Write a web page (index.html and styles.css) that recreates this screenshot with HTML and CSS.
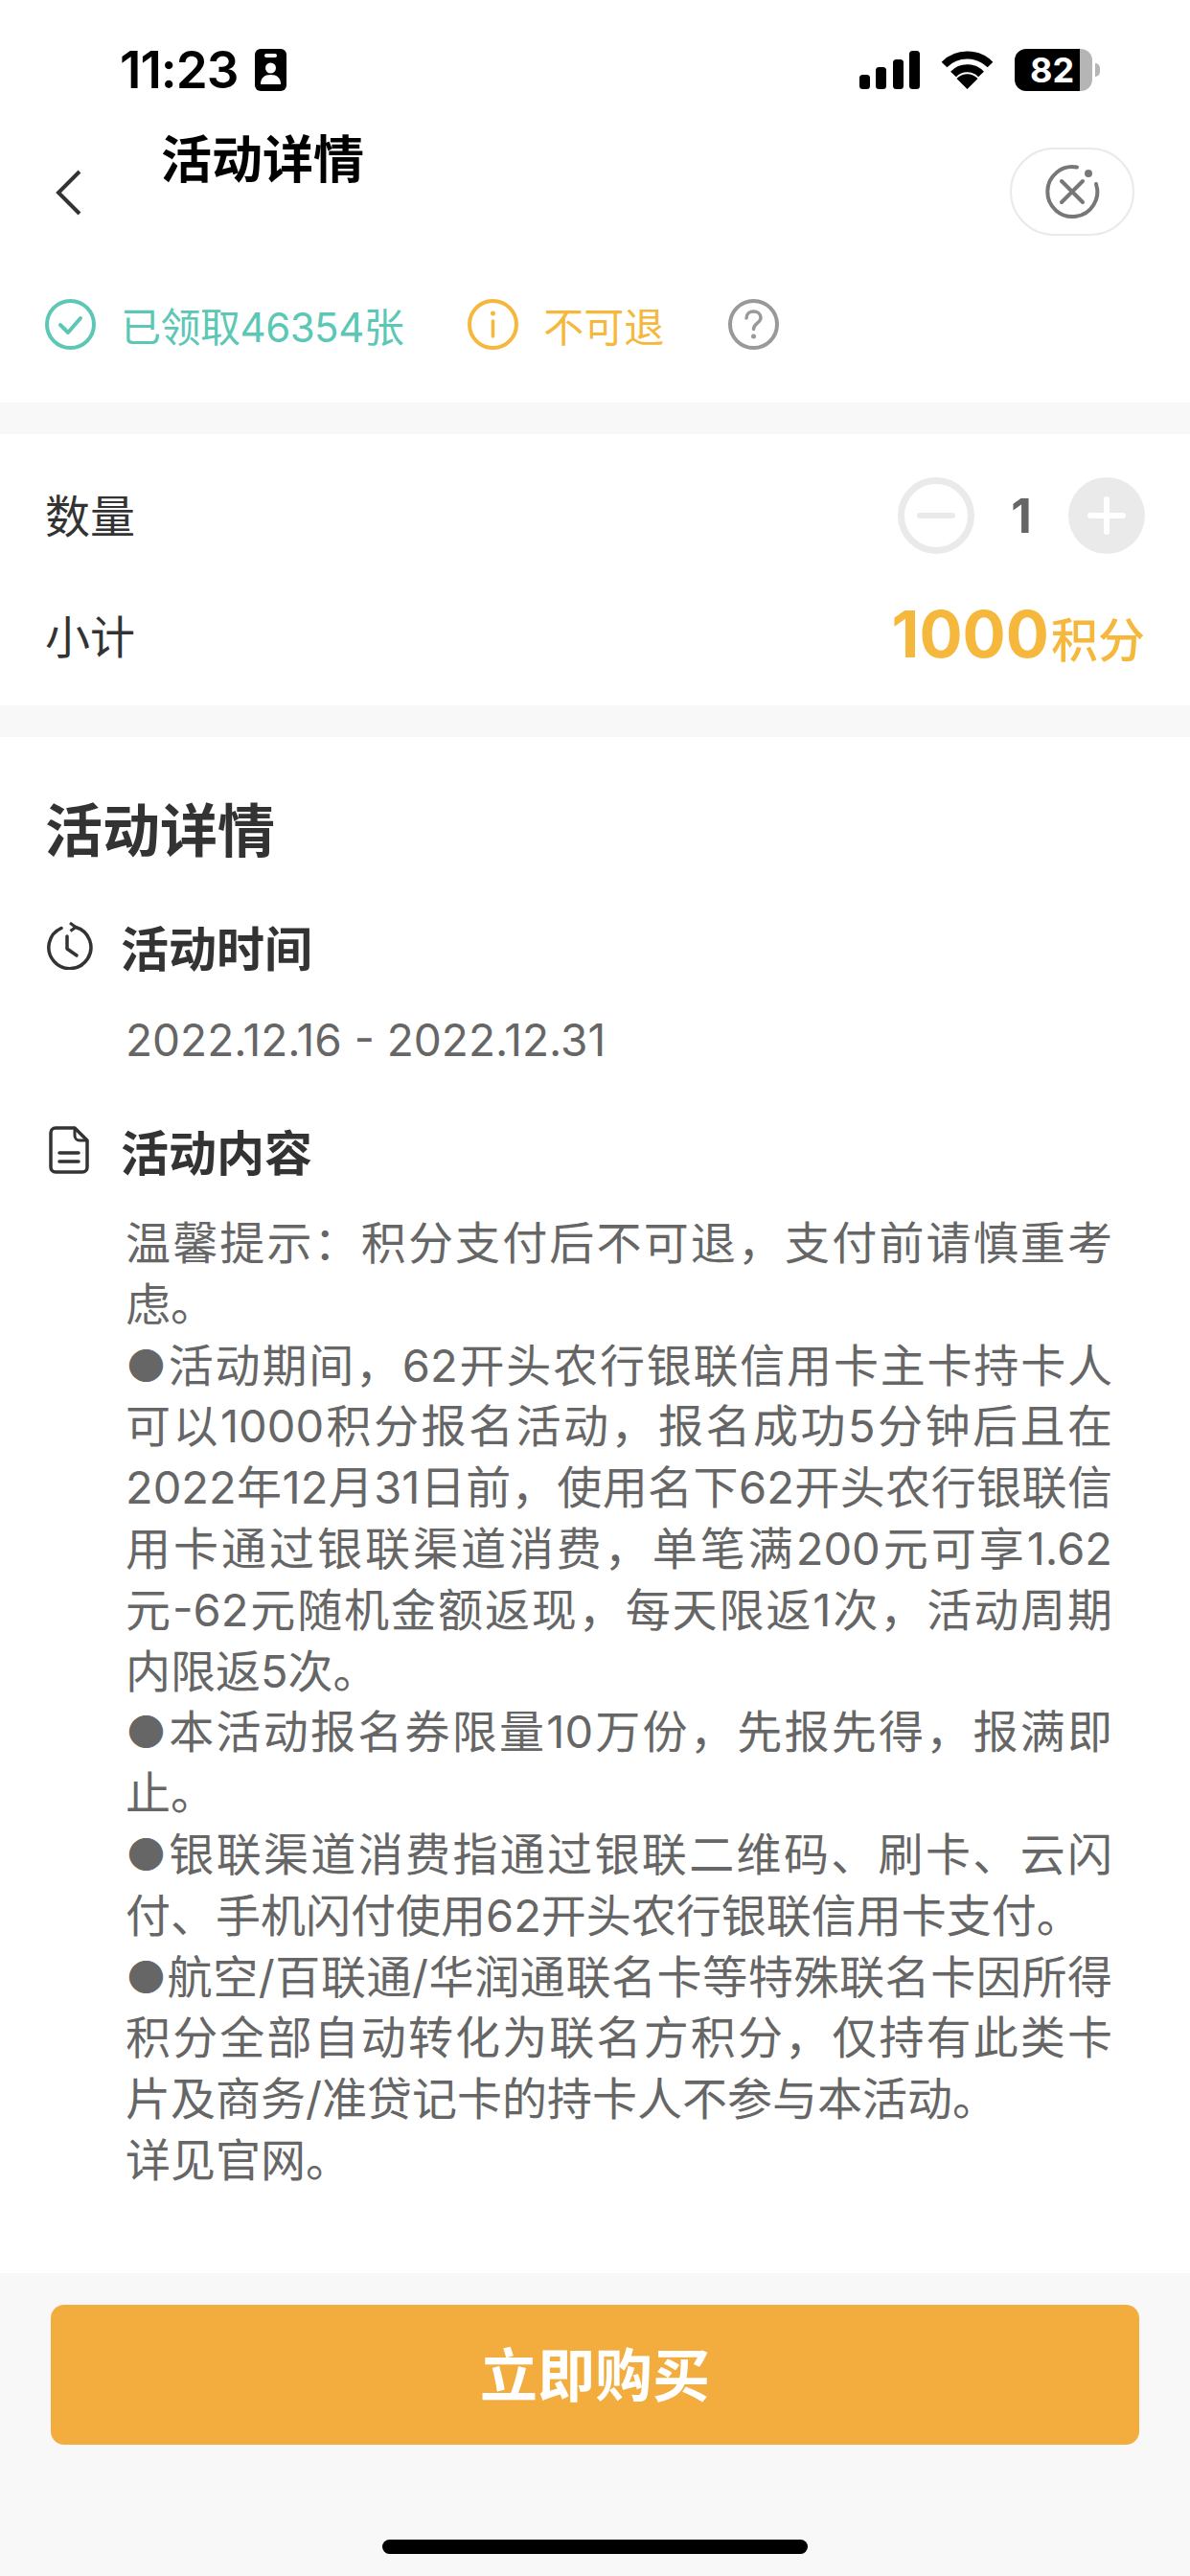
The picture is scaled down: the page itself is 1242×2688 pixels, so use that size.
FILE: index.html
```html
<!DOCTYPE html>
<html lang="zh-CN">
<head>
    <meta charset="UTF-8">
    <meta name="viewport" content="width=device-width, initial-scale=1.0">
    <title>活动详情</title>
    <link rel="stylesheet" href="styles.css">
</head>
<body>
    <div class="page">
        <div class="status-bar">
            <span class="time">11:23</span>
            <svg class="person-icon" width="33" height="44" viewBox="0 0 33 44">
                <rect width="33" height="44" rx="6" fill="#000"/>
                <rect x="10" y="5" width="13" height="4" rx="2" fill="#fff"/>
                <circle cx="16.500" cy="20" r="5.500" fill="#fff"/>
                <path d="M6 37c0-7 4-10 10.500-10S27 30 27 37z" fill="#fff"/>
            </svg>
            <div class="status-right">
                <svg width="63" height="40" viewBox="0 0 63 40">
                    <rect x="0" y="25" width="11" height="15" rx="3.500"/>
                    <rect x="17" y="17" width="11" height="23" rx="3.500"/>
                    <rect x="35" y="9" width="11" height="31" rx="3.500"/>
                    <rect x="52" y="0" width="11" height="40" rx="3.500"/>
                </svg>
                <svg class="wifi-icon" width="55" height="40" viewBox="0 0 55 40">
                    <path d="M3.500 14.500a34 34 0 0 1 48 0" fill="none" stroke="#000" stroke-width="8"/>
                    <path d="M13 24.500a20 20 0 0 1 29 0" fill="none" stroke="#000" stroke-width="8"/>
                    <path d="M27.500 40l-11-11a15 15 0 0 1 22 0z"/>
                </svg>
                <div class="battery">
                    <div class="battery-body"><span>82</span></div>
                    <div class="battery-nub"></div>
                </div>
            </div>
        </div>

        <div class="nav">
            <svg class="back-icon" width="28" height="48" viewBox="0 0 28 48">
                <path d="M25 2L3 24l22 22" fill="none" stroke="#333" stroke-width="4"/>
            </svg>
            <h1 class="nav-title">活动详情</h1>
            <div class="close-btn">
                <svg width="64" height="64" viewBox="0 0 64 64">
                    <path d="M37 6.500A26 26 0 1 0 57 24" fill="none" stroke="#777" stroke-width="4" stroke-linecap="round"/>
                    <circle cx="49" cy="13" r="4" fill="#777"/>
                    <path d="M21 21l22 22M43 21L21 43" stroke="#777" stroke-width="4" stroke-linecap="round"/>
                </svg>
            </div>
        </div>

        <div class="tags">
            <svg width="53" height="53" viewBox="0 0 53 53">
                <circle cx="26.500" cy="26.500" r="24.500" fill="none" stroke="#5cc7b5" stroke-width="4"/>
                <path d="M16 27l8 8 13-15" fill="none" stroke="#5cc7b5" stroke-width="4" stroke-linecap="round" stroke-linejoin="round"/>
            </svg>
            <span class="tag-text tag-green">已领取46354张</span>
            <svg class="tag-gap" width="53" height="53" viewBox="0 0 53 53">
                <circle cx="26.500" cy="26.500" r="24.500" fill="none" stroke="#f5b83d" stroke-width="4"/>
                <circle cx="26.500" cy="15" r="2.500" fill="#f5b83d"/>
                <path d="M26.500 23v16" stroke="#f5b83d" stroke-width="3.500" stroke-linecap="round"/>
            </svg>
            <span class="tag-text tag-yellow">不可退</span>
            <svg class="tag-gap" width="53" height="53" viewBox="0 0 53 53">
                <circle cx="26.500" cy="26.500" r="24.500" fill="none" stroke="#999" stroke-width="4"/>
                <path d="M19 20c0-4.500 3.500-7 7.500-7s7.500 2.500 7.500 6.500c0 5.500-7.500 6-7.500 12" fill="none" stroke="#999" stroke-width="3.500" stroke-linecap="round"/>
                <circle cx="26.500" cy="39" r="2.500" fill="#999"/>
            </svg>
        </div>

        <div class="band"></div>

        <div class="order">
            <div class="order-row">
                <span class="order-label">数量</span>
                <div class="stepper">
                    <div class="step-btn step-minus"><i class="bar-h"></i></div>
                    <span class="count">1</span>
                    <div class="step-btn step-plus"><i class="bar-h"></i><i class="bar-v"></i></div>
                </div>
            </div>
            <div class="order-row">
                <span class="order-label">小计</span>
                <div class="price"><b>1000</b><span>积分</span></div>
            </div>
        </div>

        <div class="band"></div>

        <div class="detail">
            <h2 class="detail-title">活动详情</h2>

            <div class="section-head section-time">
                <svg width="50" height="50" viewBox="0 0 50 50">
                    <path d="M31 5.500A22 22 0 1 1 16 6.500" fill="none" stroke="#333" stroke-width="3.500" stroke-linecap="round"/>
                    <path d="M25 1l6 4.500-5.500 4" fill="none" stroke="#333" stroke-width="3" stroke-linejoin="round"/>
                    <path d="M22 15v13l10 7" fill="none" stroke="#333" stroke-width="3.500" stroke-linecap="round" stroke-linejoin="round"/>
                </svg>
                <h3>活动时间</h3>
            </div>
            <p class="date">2022.12.16 - 2022.12.31</p>

            <div class="section-head section-content">
                <svg width="50" height="50" viewBox="0 0 50 50">
                    <path d="M10 2h20l13 13v28a5 5 0 0 1-5 5H10a5 5 0 0 1-5-5V7a5 5 0 0 1 5-5z" fill="none" stroke="#333" stroke-width="3.500" stroke-linejoin="round"/>
                    <path d="M30 2v8a5 5 0 0 0 5 5h8" fill="none" stroke="#333" stroke-width="3"/>
                    <path d="M14 28h20M14 37h20" stroke="#333" stroke-width="3.500" stroke-linecap="round"/>
                </svg>
                <h3>活动内容</h3>
            </div>
            <div class="content">
                <p>温馨提示：积分支付后不可退，支付前请慎重考虑。</p>
                <p>●活动期间，62开头农行银联信用卡主卡持卡人可以1000积分报名活动，报名成功5分钟后且在2022年12月31日前，使用名下62开头农行银联信用卡通过银联渠道消费，单笔满200元可享1.62元-62元随机金额返现，每天限返1次，活动周期内限返5次。</p>
                <p>●本活动报名券限量10万份，先报先得，报满即止。</p>
                <p>●银联渠道消费指通过银联二维码、刷卡、云闪付、手机闪付使用62开头农行银联信用卡支付。</p>
                <p>●航空/百联通/华润通联名卡等特殊联名卡因所得积分全部自动转化为联名方积分，仅持有此类卡片及商务/准贷记卡的持卡人不参与本活动。</p>
                <p>详见官网。</p>
            </div>
        </div>

        <div class="footer">
            <div class="buy-btn">立即购买</div>
            <div class="home-bar"></div>
        </div>
    </div>
</body>
</html>
```

FILE: styles.css
```css
* {
    box-sizing: border-box;
}

body {
    margin: 0;
    background: #fff;
    font-family: Inter, "Noto Sans CJK SC", sans-serif;
    color: #333;
}

.page {
    width: 1242px;
    height: 2688px;
    display: flex;
    flex-direction: column;
    overflow: hidden;
}

/* status bar */
.status-bar {
    height: 130px;
    padding: 48px 94px 0 125px;
    display: flex;
    align-items: flex-start;
}

.time {
    font-size: 53px;
    font-weight: 600;
    line-height: 50px;
    color: #000;
    letter-spacing: -1px;
}

.person-icon {
    margin: 3px 0 0 18px;
}

.status-right {
    margin-left: auto;
    display: flex;
    align-items: center;
    gap: 22px;
    height: 50px;
}

.battery {
    display: flex;
    align-items: center;
}

.battery-body {
    width: 81px;
    height: 44px;
    border-radius: 12px;
    background: linear-gradient(90deg, #000 68px, #b5b5b5 68px);
    display: flex;
    align-items: center;
    padding-left: 16px;
}

.battery-body span {
    color: #fff;
    font-size: 36px;
    font-weight: 700;
}

.battery-nub {
    width: 5px;
    height: 14px;
    margin-left: 3px;
    background: #b5b5b5;
    border-radius: 0 7px 7px 0;
}

/* nav */
.nav {
    height: 120px;
    padding: 0 58px 0 58px;
    display: flex;
    align-items: flex-start;
}

.back-icon {
    margin-top: 47px;
}

.nav-title {
    margin: 0 0 0 82px;
    font-size: 53px;
    font-weight: 700;
    line-height: 74px;
    color: #000;
}

.close-btn {
    width: 130px;
    height: 92px;
    margin: 24px 0 0 auto;
    border: 2px solid #eaeaea;
    border-radius: 46px;
    display: flex;
    align-items: center;
    justify-content: center;
}

/* tags */
.tags {
    height: 170px;
    padding: 6px 0 0 47px;
    display: flex;
    align-items: center;
}

.tag-text {
    margin-left: 26px;
    font-size: 42px;
}

.tag-green {
    color: #5cc7b5;
    letter-spacing: -0.5px;
}

.tag-yellow {
    color: #f5b83d;
}

.tag-gap {
    margin-left: 67px;
}

.band {
    height: 33px;
    flex: none;
    background: #f8f8f8;
}

/* quantity and subtotal */
.order {
    padding: 20px 47px 13px;
}

.order-row {
    height: 125px;
    display: flex;
    align-items: center;
    justify-content: space-between;
}

.order-row + .order-row {
    padding-top: 2px;
}

.order-label {
    font-size: 47px;
}

.stepper {
    display: flex;
    align-items: center;
    padding-top: 4px;
}

.step-btn {
    width: 80px;
    height: 80px;
    border-radius: 50%;
    position: relative;
}

.step-minus {
    border: 7px solid #eaeaea;
}

.step-plus {
    background: #eaeaea;
}

.step-btn i {
    position: absolute;
    border-radius: 3px;
}

.bar-h {
    left: 20px;
    right: 20px;
    top: 37px;
    height: 6px;
    background: #fff;
}

.step-minus .bar-h {
    left: 13px;
    right: 13px;
    top: 30px;
    background: #eaeaea;
}

.bar-v {
    top: 20px;
    bottom: 20px;
    left: 37px;
    width: 6px;
    background: #fff;
}

.count {
    width: 98px;
    text-align: center;
    font-size: 50px;
    font-weight: 700;
    color: #666;
}

.price {
    color: #f5b83d;
    display: flex;
    align-items: baseline;
}

.price b {
    font-size: 67px;
    font-weight: 700;
}

.price span {
    margin-left: 2px;
    font-size: 49px;
    font-weight: 500;
}

/* details */
.detail {
    flex: 1;
    padding: 58px 47px 0;
}

.detail-title {
    margin: 0;
    font-size: 60px;
    font-weight: 700;
    line-height: 80px;
}

.section-head {
    height: 60px;
    display: flex;
    align-items: center;
    gap: 28px;
}

.section-head svg {
    margin-left: 1px;
}

.section-head h3 {
    margin: 0;
    font-size: 50px;
    font-weight: 700;
}

.section-time {
    margin-top: 50px;
}

.section-content {
    margin-top: 55px;
}

.date {
    margin: 38px 0 0 84px;
    font-size: 46px;
    line-height: 60px;
    color: #666;
}

.content {
    margin: 35px 0 0 84px;
    width: 1030px;
    font-size: 47px;
    line-height: 63.8px;
    text-align: justify;
    color: #666;
}

.content p {
    margin: 0;
}

/* bottom */
.footer {
    height: 316px;
    flex: none;
    padding: 33px 53px 0;
    background: #f8f8f8;
}

.buy-btn {
    height: 146px;
    padding-bottom: 8px;
    border-radius: 14px;
    background: #f3ad3e;
    color: #fff;
    font-size: 60px;
    font-weight: 700;
    display: flex;
    align-items: center;
    justify-content: center;
}

.home-bar {
    width: 444px;
    height: 15px;
    margin: 99px auto 0;
    border-radius: 8px;
    background: #000;
}
```
